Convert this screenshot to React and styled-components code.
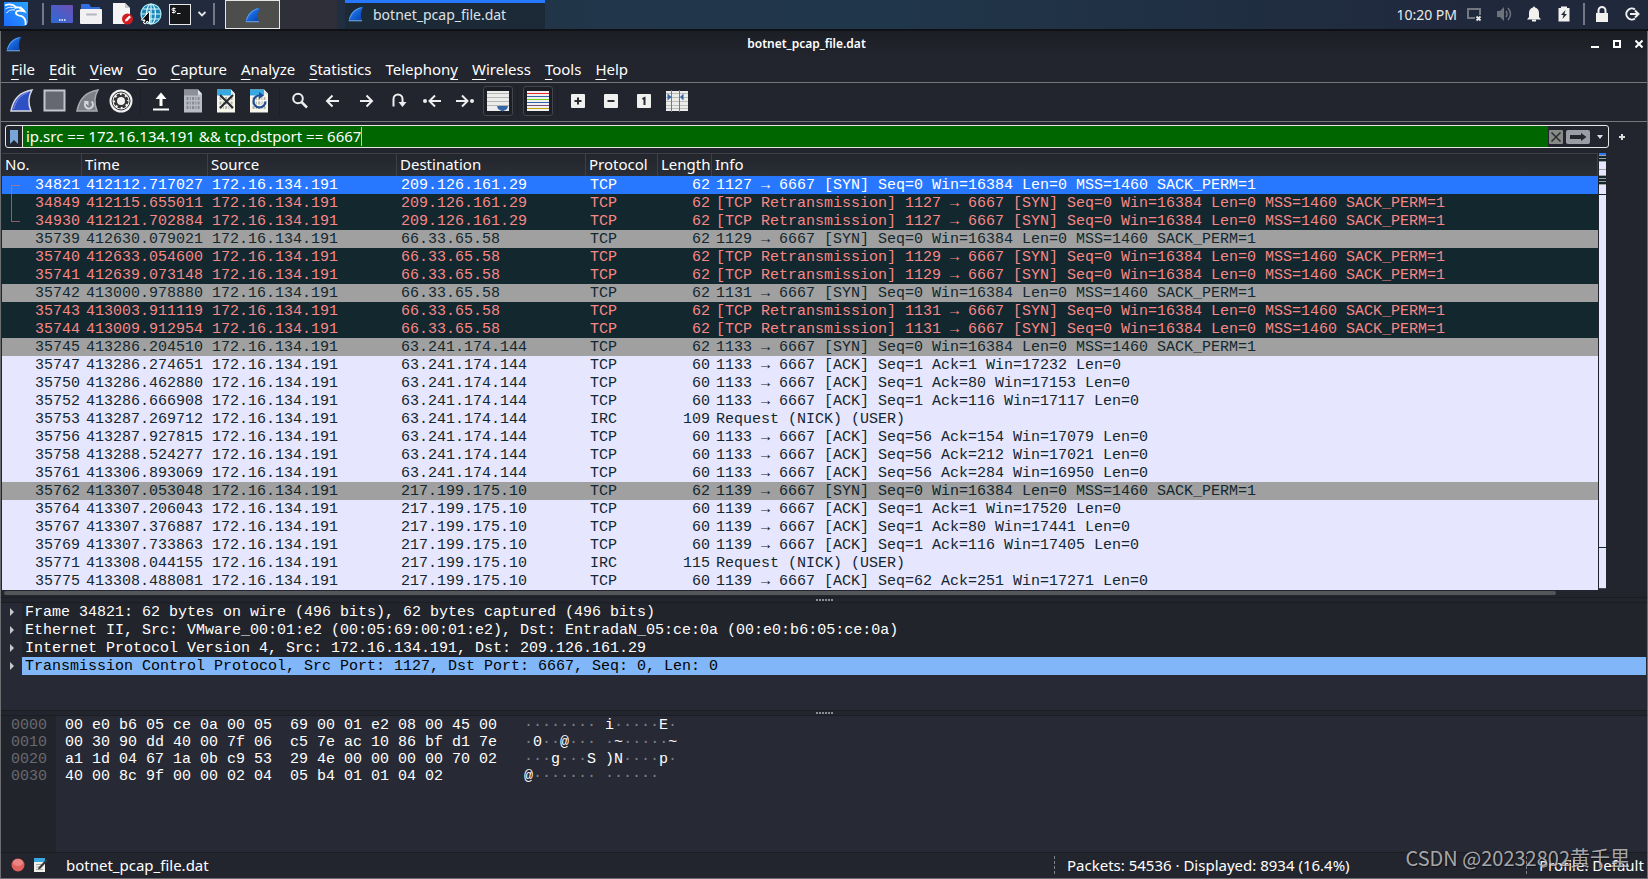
import React, { useState } from "react";
import styled, { createGlobalStyle } from "styled-components";

const packets = [
  ["34821", "412112.717027", "209.126.161.29", "TCP", "62", "1127 → 6667 [SYN] Seq=0 Win=16384 Len=0 MSS=1460 SACK_PERM=1", "selected"],
  ["34849", "412115.655011", "209.126.161.29", "TCP", "62", "[TCP Retransmission] 1127 → 6667 [SYN] Seq=0 Win=16384 Len=0 MSS=1460 SACK_PERM=1", "bad"],
  ["34930", "412121.702884", "209.126.161.29", "TCP", "62", "[TCP Retransmission] 1127 → 6667 [SYN] Seq=0 Win=16384 Len=0 MSS=1460 SACK_PERM=1", "bad"],
  ["35739", "412630.079021", "66.33.65.58", "TCP", "62", "1129 → 6667 [SYN] Seq=0 Win=16384 Len=0 MSS=1460 SACK_PERM=1", "syn"],
  ["35740", "412633.054600", "66.33.65.58", "TCP", "62", "[TCP Retransmission] 1129 → 6667 [SYN] Seq=0 Win=16384 Len=0 MSS=1460 SACK_PERM=1", "bad"],
  ["35741", "412639.073148", "66.33.65.58", "TCP", "62", "[TCP Retransmission] 1129 → 6667 [SYN] Seq=0 Win=16384 Len=0 MSS=1460 SACK_PERM=1", "bad"],
  ["35742", "413000.978880", "66.33.65.58", "TCP", "62", "1131 → 6667 [SYN] Seq=0 Win=16384 Len=0 MSS=1460 SACK_PERM=1", "syn"],
  ["35743", "413003.911119", "66.33.65.58", "TCP", "62", "[TCP Retransmission] 1131 → 6667 [SYN] Seq=0 Win=16384 Len=0 MSS=1460 SACK_PERM=1", "bad"],
  ["35744", "413009.912954", "66.33.65.58", "TCP", "62", "[TCP Retransmission] 1131 → 6667 [SYN] Seq=0 Win=16384 Len=0 MSS=1460 SACK_PERM=1", "bad"],
  ["35745", "413286.204510", "63.241.174.144", "TCP", "62", "1133 → 6667 [SYN] Seq=0 Win=16384 Len=0 MSS=1460 SACK_PERM=1", "syn"],
  ["35747", "413286.274651", "63.241.174.144", "TCP", "60", "1133 → 6667 [ACK] Seq=1 Ack=1 Win=17232 Len=0", "tcp"],
  ["35750", "413286.462880", "63.241.174.144", "TCP", "60", "1133 → 6667 [ACK] Seq=1 Ack=80 Win=17153 Len=0", "tcp"],
  ["35752", "413286.666908", "63.241.174.144", "TCP", "60", "1133 → 6667 [ACK] Seq=1 Ack=116 Win=17117 Len=0", "tcp"],
  ["35753", "413287.269712", "63.241.174.144", "IRC", "109", "Request (NICK) (USER)", "tcp"],
  ["35756", "413287.927815", "63.241.174.144", "TCP", "60", "1133 → 6667 [ACK] Seq=56 Ack=154 Win=17079 Len=0", "tcp"],
  ["35758", "413288.524277", "63.241.174.144", "TCP", "60", "1133 → 6667 [ACK] Seq=56 Ack=212 Win=17021 Len=0", "tcp"],
  ["35761", "413306.893069", "63.241.174.144", "TCP", "60", "1133 → 6667 [ACK] Seq=56 Ack=284 Win=16950 Len=0", "tcp"],
  ["35762", "413307.053048", "217.199.175.10", "TCP", "62", "1139 → 6667 [SYN] Seq=0 Win=16384 Len=0 MSS=1460 SACK_PERM=1", "syn"],
  ["35764", "413307.206043", "217.199.175.10", "TCP", "60", "1139 → 6667 [ACK] Seq=1 Ack=1 Win=17520 Len=0", "tcp"],
  ["35767", "413307.376887", "217.199.175.10", "TCP", "60", "1139 → 6667 [ACK] Seq=1 Ack=80 Win=17441 Len=0", "tcp"],
  ["35769", "413307.733863", "217.199.175.10", "TCP", "60", "1139 → 6667 [ACK] Seq=1 Ack=116 Win=17405 Len=0", "tcp"],
  ["35771", "413308.044155", "217.199.175.10", "IRC", "115", "Request (NICK) (USER)", "tcp"],
  ["35775", "413308.488081", "217.199.175.10", "TCP", "60", "1139 → 6667 [ACK] Seq=62 Ack=251 Win=17271 Len=0", "tcp"],
];

const details = [
  "Frame 34821: 62 bytes on wire (496 bits), 62 bytes captured (496 bits)",
  "Ethernet II, Src: VMware_00:01:e2 (00:05:69:00:01:e2), Dst: EntradaN_05:ce:0a (00:e0:b6:05:ce:0a)",
  "Internet Protocol Version 4, Src: 172.16.134.191, Dst: 209.126.161.29",
  "Transmission Control Protocol, Src Port: 1127, Dst Port: 6667, Seq: 0, Len: 0",
];

const bytes = [
  ["0000", "00 e0 b6 05 ce 0a 00 05  69 00 01 e2 08 00 45 00", "········ i·····E·"],
  ["0010", "00 30 90 dd 40 00 7f 06  c5 7e ac 10 86 bf d1 7e", "·0··@··· ·~·····~"],
  ["0020", "a1 1d 04 67 1a 0b c9 53  29 4e 00 00 00 00 70 02", "···g···S )N····p·"],
  ["0030", "40 00 8c 9f 00 00 02 04  05 b4 01 01 04 02", "@······· ······"],
];

// label, index of the underlined letter
const menus = [
  ["File", 0],
  ["Edit", 0],
  ["View", 0],
  ["Go", 0],
  ["Capture", 0],
  ["Analyze", 0],
  ["Statistics", 0],
  ["Telephony", 8],
  ["Wireless", 0],
  ["Tools", 0],
  ["Help", 0],
];

// y, height, colour of each stripe in the overview next to the list
const stripes = [
  [0, 2, "#2777ff"],
  [2, 7, "#12272e"],
  [2, 1, "#a0a0a0"],
  [5, 1, "#a0a0a0"],
  [8, 1, "#a0a0a0"],
  [16, 1, "#a0a0a0"],
  [22, 9, "#12272e"],
  [22, 1, "#a0a0a0"],
  [25, 1, "#a0a0a0"],
  [28, 1, "#a0a0a0"],
  [31, 1, "#a0a0a0"],
  [41, 1, "#12272e"],
  [394, 1, "#12272e"],
  [435, 1, "#4a4c52"],
];

const FIN = "M1 22C3 11 9 3 22 1C18 8 18 15 21 22Z";

const Fin = ({ size = 22 }) => (
  <svg width={size} height={size} viewBox="0 0 24 24">
    <defs>
      <linearGradient id="fin" x1="0" y1="0" x2="1" y2="1">
        <stop offset="0" stopColor="#4fa3f5" />
        <stop offset="0.5" stopColor="#1463d8" />
        <stop offset="1" stopColor="#0a3da8" />
      </linearGradient>
    </defs>
    <path d="M1 22C3 11 9 3 23 1C19 8 18 15 21 22Z" fill="url(#fin)" />
    <path d="M1 22H21" stroke="#5f93c9" strokeWidth="2" />
    <path d="M2 20C5 11 10 5 20 2.500" stroke="#7fbdf5" strokeWidth="1" fill="none" />
  </svg>
);

const KaliLogo = () => (
  <svg width="24" height="24" viewBox="0 0 24 24">
    <defs>
      <linearGradient id="kali" x1="0" y1="1" x2="1" y2="0">
        <stop offset="0" stopColor="#1d6cff" />
        <stop offset="1" stopColor="#29a3ff" />
      </linearGradient>
    </defs>
    <path d="M0 0H24V21L21 24H0Z" fill="url(#kali)" />
    <path
      d="M1 3.500C6 1 10 3 12.500 5.500C15 5 18 5.500 20.500 9.500C17 8.500 13 8 12 10.500C11.300 13 15 13.500 18 14.500C21 16 22 19 21.500 23"
      stroke="#fff"
      strokeWidth="1.800"
      fill="none"
    />
    <path d="M1.500 7C5 4.500 9 5 12 6.500M2.500 11C5 8 8 7.500 11 8M14 13.500C17 13 20 14.500 21 17" stroke="#fff" strokeWidth="1" fill="none" />
    <path d="M14 5.500L17 4.500L19 7L21.500 10L18 9Z" fill="#fff" />
  </svg>
);

const DesktopIcon = () => (
  <svg width="22" height="18" viewBox="0 0 22 18">
    <defs>
      <linearGradient id="desk" x1="0" y1="1" x2="1" y2="0">
        <stop offset="0" stopColor="#2b6bd8" />
        <stop offset="1" stopColor="#6d4fb4" />
      </linearGradient>
    </defs>
    <rect width="22" height="18" rx="1" fill="url(#desk)" />
    <path d="M8 15h1.500M10.500 15h1.500M13 15h1.500" stroke="#fff" strokeWidth="1.500" />
  </svg>
);

const FolderIcon = () => (
  <svg width="22" height="20" viewBox="0 0 22 20">
    <path d="M1 1q0-1 1-1h7l2 3h9v4H1z" fill="#2f6fe0" />
    <rect y="5" width="22" height="15" rx="1" fill="#f1f1f4" />
    <path d="M7 10.500h9" stroke="#b6b6bd" strokeWidth="2" strokeLinecap="round" />
  </svg>
);

const EditorIcon = () => (
  <svg width="24" height="22" viewBox="-3 0 24 22">
    <path d="M1 0h12l5 5v16H1z" fill="#f4f4f4" />
    <path d="M13 0l5 5h-5z" fill="#c9c9cc" />
    <circle cx="15.500" cy="16" r="5.500" fill="#d01c22" />
    <path d="M13 18.500l.6-2.200 3.700-3.700 1.600 1.600-3.700 3.700z" fill="#fff" />
  </svg>
);

const GlobeIcon = () => (
  <svg width="22" height="22" viewBox="0 0 22 22">
    <circle cx="11" cy="11" r="10" fill="#1b87b8" stroke="#9fe6f5" strokeWidth="1.200" />
    <g stroke="#d8f6fb" strokeWidth="1.200" fill="none">
      <ellipse cx="11" cy="11" rx="4.500" ry="10" />
      <path d="M11 1v20M1 11h20M3 6h16M3 16h16" />
    </g>
    <path d="M9.500 8v12l-2.500-2-1.500 3-2-1 1.500-3H1.500z" fill="#111" stroke="#fff" strokeWidth="1" />
  </svg>
);

const TerminalIcon = () => (
  <svg width="22" height="21" viewBox="0 0 22 21">
    <rect x="0.500" y="0.500" width="21" height="20" fill="#151719" stroke="#e8e8e8" />
    <path d="M6.500 4.500H4q-1 0-1 1t1 1h1.500q1 0 1 1t-1 1H3M4.800 3.500v6M8 9.500h3.500" stroke="#fff" fill="none" />
  </svg>
);

const Chevron = () => (
  <svg width="8" height="6" viewBox="0 0 8 6">
    <path d="M0.500 1L4 4.500 7.500 1" stroke="#e8e8e8" strokeWidth="1.800" fill="none" />
  </svg>
);

const Icon = ({ size = 24, children }) => (
  <svg width={size} height={size} viewBox={`0 0 ${size} ${size}`} fill="none">
    {children}
  </svg>
);

const Doc = ({ page, top, ink }) => (
  <>
    <path d="M2 0.500h14l4 4v19H2z" fill={page} />
    <path d="M2 0.500h14v6H2z" fill={top} />
    <path d="M16 0.500l4 5h-4z" fill="#dfe6ea" />
    <g stroke={ink} strokeWidth="3" strokeDasharray="2 1.300 1 1.300">
      <path d="M4.500 9.500h13M4.500 14h13M4.500 18.500h13" />
    </g>
  </>
);

const toolIcons = {
  start: (
    <Icon>
      <path d={FIN} fill="#2f4fc4" stroke="#d8dae0" strokeWidth="1.500" />
      <path d="M3.500 20C6 12 10 6 18 3.500" stroke="#7d92e6" strokeWidth="1" />
    </Icon>
  ),
  stop: (
    <Icon>
      <rect x="1.500" y="1.500" width="20" height="20" fill="#656871" stroke="#c3c5cd" strokeWidth="2" />
    </Icon>
  ),
  restart: (
    <Icon>
      <path d={FIN} fill="#7d8087" stroke="#a9abb2" strokeWidth="1.500" />
      <path d="M15.500 12.500A4 4 0 1 1 9.500 13.500" stroke="#d6d7db" strokeWidth="2" />
      <path d="M7.500 12h5v5z" fill="#d6d7db" />
    </Icon>
  ),
  options: (
    <Icon>
      <circle cx="12" cy="12" r="11.500" fill="#f2f2f2" />
      <circle cx="12" cy="12" r="9" stroke="#333" strokeWidth="1" />
      <circle cx="12" cy="12" r="6" stroke="#333" strokeWidth="3" strokeDasharray="3 1.700" />
      <circle cx="12" cy="12" r="5" stroke="#333" strokeWidth="2" />
    </Icon>
  ),
  open: (
    <Icon>
      <path d="M12 3.500l5.500 6.500h-4v7h-3v-7h-4z" fill="#fff" />
      <path d="M4 20.500h16" stroke="#fff" strokeWidth="2" />
    </Icon>
  ),
  save: (
    <Icon>
      <Doc page="#b9bcc4" top="#8d9098" ink="#84878f" />
    </Icon>
  ),
  close: (
    <Icon>
      <Doc page="#f6f6ea" top="#38a8e0" ink="#b3b4ac" />
      <path d="M5 6l13 13M18 6l-13 13" stroke="#26292d" strokeWidth="2" />
    </Icon>
  ),
  reload: (
    <Icon>
      <Doc page="#f6f6ea" top="#38a8e0" ink="#b3b4ac" />
      <path d="M12 6.500A6 6 0 1 0 17.500 12.500" stroke="#1f4e96" strokeWidth="2.200" />
      <path d="M11 3v7l5-3.500z" fill="#1f4e96" />
    </Icon>
  ),
  find: (
    <Icon>
      <circle cx="10" cy="9.500" r="4.800" stroke="#eee" strokeWidth="2" />
      <path d="M13.500 13l5.500 5.500" stroke="#eee" strokeWidth="2.500" />
    </Icon>
  ),
  back: (
    <Icon>
      <path d="M18 12H6.500M11.500 6.500L6 12l5.500 5.500" stroke="#eee" strokeWidth="2" />
    </Icon>
  ),
  forward: (
    <Icon>
      <path d="M6 12h11.500M12.500 6.500L18 12l-5.500 5.500" stroke="#eee" strokeWidth="2" />
    </Icon>
  ),
  goto: (
    <Icon>
      <path d="M6.500 17.500V10a4.500 4.500 0 0 1 9 0v4" stroke="#eee" strokeWidth="2" />
      <path d="M11.500 13h8l-4 5z" fill="#eee" />
    </Icon>
  ),
  first: (
    <Icon>
      <path d="M21 12H10.500M15 6.500L9.500 12l5.500 5.500" stroke="#eee" strokeWidth="2" />
      <circle cx="5" cy="12" r="2" fill="#eee" />
    </Icon>
  ),
  last: (
    <Icon>
      <path d="M3 12h10.500M9 6.500L14.500 12 9 17.500" stroke="#eee" strokeWidth="2" />
      <circle cx="19" cy="12" r="2" fill="#eee" />
    </Icon>
  ),
  autoscroll: (
    <Icon>
      <rect x="1" y="2" width="22" height="20" fill="#ececec" />
      <path d="M1 4.500h22M1 8.500h22M1 12.500h22M1 16.500h22" stroke="#b4b6b2" />
      <path d="M11 17h11l-1 3-4.500 2.500-4.500-2.500z" fill="#3465a4" />
    </Icon>
  ),
  colorize: (
    <Icon>
      <rect x="1" y="2" width="22" height="20" fill="#f0f0f0" />
      <path d="M1 4.500h22" stroke="#ef2929" />
      <path d="M1 7.500h22" stroke="#3465a4" />
      <path d="M1 10.500h22" stroke="#73d216" />
      <path d="M1 13.500h22" stroke="#3465a4" />
      <path d="M1 16.500h22" stroke="#75507b" />
      <path d="M1 19.500h22" stroke="#c4a000" />
    </Icon>
  ),
  zoomIn: (
    <Icon>
      <rect x="5" y="5" width="14" height="14" rx="1" fill="#f0f0ee" />
      <path d="M12 8.500v7M8.500 12h7" stroke="#2b2d33" strokeWidth="2" />
    </Icon>
  ),
  zoomOut: (
    <Icon>
      <rect x="5" y="5" width="14" height="14" rx="1" fill="#f0f0ee" />
      <path d="M8.500 12h7" stroke="#2b2d33" strokeWidth="2" />
    </Icon>
  ),
  zoomReset: (
    <Icon>
      <rect x="5" y="5" width="14" height="14" rx="1" fill="#f0f0ee" />
      <path d="M12.500 16V9l-2 1" stroke="#2b2d33" strokeWidth="2" />
    </Icon>
  ),
  columns: (
    <Icon>
      <rect x="1" y="2" width="22" height="20" fill="#ececec" />
      <path d="M1 4.500h22M1 8.500h22M1 12.500h22M1 16.500h22M1 19.500h22" stroke="#babdb6" />
      <path d="M6.500 1v22M14.500 1v22" stroke="#777" />
      <path d="M2.500 4.500L6.500 8l-4 3.500zM18.500 4.500L15 8l3.500 3.500z" fill="#3465a4" />
    </Icon>
  ),
};

const tools = [
  ["start", "stop", "restart", "options"],
  ["open", "save", "close", "reload"],
  ["find", "back", "forward", "goto", "first", "last", "autoscroll"],
  ["colorize"],
  ["zoomIn", "zoomOut", "zoomReset", "columns"],
];

const App = () => {
  const [filter, setFilter] = useState(
    "ip.src == 172.16.134.191 && tcp.dstport == 6667"
  );
  const [checked, setChecked] = useState(["autoscroll", "colorize"]);
  const [node, setNode] = useState(3);

  const toolHandler = (name) => {
    if (name !== "autoscroll" && name !== "colorize") return;
    if (checked.includes(name)) {
      setChecked(checked.filter((e) => e !== name));
    } else {
      setChecked([...checked, name]);
    }
  };

  return (
    <Screen>
      <GlobalStyle />
      <Panel>
        <Launchers>
          <PanelButton aria-label="Applications">
            <KaliLogo />
          </PanelButton>
          <PanelLine $margin="0 0 0 7px" />
          <PanelButton aria-label="Show desktop">
            <DesktopIcon />
          </PanelButton>
          <PanelButton aria-label="Files">
            <FolderIcon />
          </PanelButton>
          <PanelButton aria-label="Text editor">
            <EditorIcon />
          </PanelButton>
          <PanelButton aria-label="Browser">
            <GlobeIcon />
          </PanelButton>
          <PanelButton aria-label="Terminal">
            <TerminalIcon />
          </PanelButton>
          <PanelButton aria-label="More terminals">
            <Chevron />
          </PanelButton>
          <PanelLine />
        </Launchers>
        <Workspace aria-label="Workspace 1">
          <Fin size={16} />
        </Workspace>
        <WorkspaceEmpty />
        <Task>
          <Fin size={16} />
          botnet_pcap_file.dat
        </Task>
        <Tray>
          <span>10:20 PM</span>
          <svg width="16" height="16" viewBox="0 0 16 16">
            <path d="M9 12H2V3h12v6" stroke="#74777f" strokeWidth="2" fill="none" />
            <path d="M10.500 10.500l4 4M14.500 10.500l-4 4" stroke="#e8e8e8" strokeWidth="1.800" />
          </svg>
          <svg width="16" height="16" viewBox="0 0 16 16">
            <path d="M1 5h3l4-4v14l-4-4H1z" fill="#6e727c" />
            <path d="M10 5q2 3 0 6M12 2q5 6 0 12" stroke="#6e727c" strokeWidth="1.500" fill="none" />
          </svg>
          <svg width="16" height="16" viewBox="0 0 16 16">
            <path d="M8 0.500q1 0 1 1q4 1 4 5.500v4l2 2.500H1L3 11V7q0-4.500 4-5.500q0-1 1-1z" fill="#f1f1ef" />
            <path d="M6 14.500h4" stroke="#f1f1ef" strokeWidth="2" />
          </svg>
          <svg width="16" height="16" viewBox="0 0 16 16">
            <path d="M2.500 2H5V0.500h6V2h2.500v13.500h-11z" fill="#f1f1ef" />
            <path d="M9.500 4L5 9h2.500l-1 4L11 8H8.500z" fill="#20283a" />
          </svg>
          <PanelLine $margin="0 -5px 0 -3px" />
          <svg width="16" height="16" viewBox="0 0 16 16">
            <path d="M4.500 7V4.500a3.500 3.500 0 0 1 7 0V7" stroke="#f1f1ef" strokeWidth="2" fill="none" />
            <rect x="2" y="7" width="12" height="9" fill="#f1f1ef" />
          </svg>
          <svg width="16" height="16" viewBox="0 0 16 16">
            <path d="M11 3.500A5.500 5.500 0 1 0 11 12.500" stroke="#f1f1ef" strokeWidth="2" fill="none" />
            <path d="M6 8h7M11 4.500L14.500 8 11 11.500" stroke="#f1f1ef" strokeWidth="2" fill="none" />
          </svg>
        </Tray>
      </Panel>

      <Window>
        <TitleBar>
          <Fin size={16} />
          <Title>botnet_pcap_file.dat</Title>
          <WindowButton aria-label="Minimize">
            <Icon size={8}>
              <path d="M0 7h8" stroke="#fff" strokeWidth="2" />
            </Icon>
          </WindowButton>
          <WindowButton aria-label="Maximize">
            <Icon size={8}>
              <rect x="1" y="1" width="6" height="6" stroke="#fff" strokeWidth="2" />
            </Icon>
          </WindowButton>
          <WindowButton aria-label="Close">
            <Icon size={8}>
              <path d="M0.500 0.500l7 7M7.500 0.500l-7 7" stroke="#fff" strokeWidth="2" />
            </Icon>
          </WindowButton>
        </TitleBar>

        <MenuBar>
          {menus.map(([label, index]) => (
            <MenuButton key={label}>
              {label.slice(0, index)}
              <u>{label[index]}</u>
              {label.slice(index + 1)}
            </MenuButton>
          ))}
        </MenuBar>

        <ToolBar>
          {tools.map((group, index) => (
            <ToolGroup key={`group${index}`}>
              {group.map((name) => (
                <ToolButton
                  key={name}
                  aria-label={name}
                  $checked={checked.includes(name)}
                  onClick={() => toolHandler(name)}
                >
                  <span>{toolIcons[name]}</span>
                </ToolButton>
              ))}
            </ToolGroup>
          ))}
        </ToolBar>

        <FilterBar>
          <FilterBox>
            <FilterButton aria-label="Bookmarks" $width="16px">
              <svg width="8" height="14" viewBox="0 0 8 14">
                <path d="M0 0h8v14l-4-4-4 4z" fill="#77a5d8" />
              </svg>
            </FilterButton>
            <FilterField>
              <FilterInput
                aria-label="Display filter"
                value={filter}
                spellCheck={false}
                onChange={(e) => setFilter(e.target.value)}
              />
              <Caret />
            </FilterField>
            <FilterButton aria-label="Clear filter" $width="16px">
              <svg width="14" height="14" viewBox="0 0 14 14">
                <rect width="14" height="14" rx="1" fill="#888a85" />
                <path d="M2.500 2.500l9 9M11.500 2.500l-9 9" stroke="#2b2d33" strokeWidth="1.500" />
              </svg>
            </FilterButton>
            <FilterButton aria-label="Apply filter" $width="28px">
              <svg width="24" height="14" viewBox="0 0 24 14">
                <rect width="24" height="14" rx="2" fill="#9a9ca6" />
                <path d="M4 5h11V3l5.500 4L15 11V9H4z" fill="#25272e" />
              </svg>
            </FilterButton>
            <FilterButton aria-label="Recent filters" $width="16px">
              <svg width="6" height="4" viewBox="0 0 6 4">
                <path d="M0 0h6L3 4z" fill="#ddd" />
              </svg>
            </FilterButton>
          </FilterBox>
          <FilterButton aria-label="Add filter" $width="26px">
            <Icon size={8}>
              <path d="M4 1v6M1 4h6" stroke="#ddd" strokeWidth="2" />
            </Icon>
          </FilterButton>
        </FilterBar>

        <PacketPane>
          <PacketTable>
            <colgroup>
              <Col $width="80px" />
              <Col $width="126px" />
              <Col $width="189px" />
              <Col $width="189px" />
              <Col $width="72px" />
              <Col $width="54px" />
              <Col />
            </colgroup>
            <thead>
              <tr>
                <Th>No.</Th>
                <Th>Time</Th>
                <Th>Source</Th>
                <Th>Destination</Th>
                <Th>Protocol</Th>
                <Th>Length</Th>
                <Th>Info</Th>
              </tr>
            </thead>
            <tbody>
              {packets.map(([no, time, dst, proto, len, info, kind], index) => (
                <Row key={no} $kind={kind}>
                  <Td $right>
                    {index === 0 && <Bracket />}
                    {no}
                  </Td>
                  <Td>{time}</Td>
                  <Td>172.16.134.191</Td>
                  <Td>{dst}</Td>
                  <Td>{proto}</Td>
                  <Td $right>{len}</Td>
                  <Td>{info}</Td>
                </Row>
              ))}
            </tbody>
          </PacketTable>
          <Overview>
            <svg width="7" height="436" viewBox="0 0 7 436">
              <rect width="7" height="436" fill="#e7e6ff" />
              {stripes.map(([y, h, fill]) => (
                <rect key={`${y}-${h}`} y={y} width="7" height={h} fill={fill} />
              ))}
            </svg>
          </Overview>
        </PacketPane>
        <ScrollTrack>
          <ScrollThumb />
        </ScrollTrack>

        <Grip />
        <Tree>
          {details.map((text, index) => (
            <TreeRow key={text} onClick={() => setNode(index)}>
              <svg width="4" height="8" viewBox="0 0 4 8">
                <path d="M0 0l4 4-4 4z" fill="#c6c8cc" />
              </svg>
              <TreeText $active={node === index}>{text}</TreeText>
            </TreeRow>
          ))}
        </Tree>

        <Grip />
        <Bytes>
          <Offsets>
            {bytes.map(([offset]) => (
              <div key={offset}>{offset}</div>
            ))}
          </Offsets>
          <Hex>
            {bytes.map(([offset, hex]) => (
              <div key={offset}>{hex}</div>
            ))}
          </Hex>
          <Ascii>
            {bytes.map(([offset, , text]) => (
              <div key={offset}>
                {text.split(/(·+)/).map((part, i) => (part[0] === "·" ? <i key={i}>{part}</i> : part))}
              </div>
            ))}
          </Ascii>
        </Bytes>

        <StatusBar>
          <StatusFile>
            <svg width="14" height="14" viewBox="0 0 14 14">
              <circle cx="7" cy="7" r="6.500" fill="#e0605f" />
              <ellipse cx="7" cy="4.500" rx="5" ry="3.500" fill="#e98582" />
            </svg>
            <svg width="14" height="14" viewBox="0 0 14 14">
              <path d="M0 0h11v14H0z" fill="#f1f1ea" />
              <path d="M0 0h11v4H0z" fill="#38a8e0" />
              <path d="M2 6.500h6M2 9h4M2 11.500h7" stroke="#aaa" />
              <path d="M4.500 9.500L12 1.500l2 1-7.500 8-2.500 1z" fill="#33363a" />
            </svg>
            <span>botnet_pcap_file.dat</span>
          </StatusFile>
          <StatusPart>Packets: 54536 · Displayed: 8934 (16.4%)</StatusPart>
          <StatusPart>Profile: Default</StatusPart>
        </StatusBar>
      </Window>
      <Watermark>CSDN @20232802黄千里</Watermark>
    </Screen>
  );
};

const GlobalStyle = createGlobalStyle`
  * {
    box-sizing: border-box;
  }
  body {
    margin: 0;
    background: #23252e;
    color: #fff;
    font-family: "Noto Sans", "Open Sans", sans-serif;
    font-size: 15px;
  }
  button,
  input {
    font: inherit;
    color: inherit;
    border: 0;
    background: none;
    padding: 0;
    margin: 0;
    outline: none;
  }
  svg {
    display: block;
    flex: none;
  }
`;

const Screen = styled.div`
  position: relative;
  min-height: 100vh;
  display: flex;
  flex-direction: column;
  overflow: hidden;
`;

const Panel = styled.header`
  height: 31px;
  display: flex;
  flex: none;
  background: linear-gradient(90deg, #20293b 0%, #222a3e 14%, #21364a 36%, #20364a 55%, #20283c 90%);
  border-bottom: 2px solid #0f1115;
`;

const Launchers = styled.div`
  width: 225px;
  height: 28px;
  display: flex;
  align-items: center;
  gap: 7px;
  padding-left: 4px;
`;

const PanelButton = styled.button`
  display: flex;
  align-items: center;
`;

const PanelLine = styled.div`
  width: 2px;
  height: 22px;
  margin: ${(props) => props.$margin || "0"};
  background: #747985;
`;

const Workspace = styled.button`
  width: 55px;
  height: 29px;
  display: flex;
  align-items: center;
  justify-content: center;
  border: 1px solid #e6e6e6;
  background: #4d4d4c;
`;

const WorkspaceEmpty = styled.div`
  width: 57px;
  height: 29px;
  background: #2f2f3a;
`;

const Task = styled.button`
  width: 200px;
  height: 29px;
  margin-left: 8px;
  padding: 0 0 4px 3px;
  display: flex;
  align-items: center;
  gap: 9px;
  border-top: 3px solid #2777ff;
  background: #1c2a38;
  color: #dfe1e4;
  font-size: 14px;
`;

const Tray = styled.div`
  height: 28px;
  margin-left: auto;
  padding-right: 8px;
  display: flex;
  align-items: center;
  gap: 14px;
  color: #e8e9ec;
  font-size: 14px;
  span {
    margin-right: -5px;
  }
`;

const Window = styled.main`
  flex: 1;
  display: flex;
  flex-direction: column;
  border: 1px solid #6b6d70;
  border-top: 0;
`;

const TitleBar = styled.div`
  height: 26px;
  padding: 0 4px 0 5px;
  display: flex;
  align-items: center;
  gap: 14px;
  background: linear-gradient(#1c1e26, #23252e);
`;

const Title = styled.div`
  flex: 1;
  padding-bottom: 2px;
  text-align: center;
  font-size: 12px;
  font-weight: 600;
`;

const WindowButton = styled.button`
  width: 8px;
  height: 8px;
`;

const MenuBar = styled.nav`
  height: 26px;
  padding-left: 3px;
  display: flex;
  align-items: flex-start;
  border-bottom: 1px solid #75777c;
`;

const MenuButton = styled.button`
  padding: 0 7px;
  line-height: 24px;
  u {
    text-underline-offset: 4px;
    text-decoration-skip-ink: none;
  }
`;

const ToolBar = styled.div`
  height: 39px;
  padding: 0 0 2px 4px;
  display: flex;
  align-items: center;
  border-bottom: 1px solid #75777c;
`;

const ToolGroup = styled.div`
  display: flex;
  & + & {
    padding-left: 3px;
    margin-left: 3px;
    border-left: 1px solid #1e2027;
  }
`;

const ToolButton = styled.button`
  width: 33px;
  height: 30px;
  display: flex;
  align-items: center;
  justify-content: center;
  span {
    width: 30px;
    height: 30px;
    display: flex;
    align-items: center;
    justify-content: center;
    border-radius: 3px;
    border: 1px solid ${(props) => (props.$checked ? "#43464e" : "transparent")};
    background: ${(props) => (props.$checked ? "#1d1f26" : "none")};
  }
`;

const FilterBar = styled.div`
  padding: 3px 12px 5px 4px;
  display: flex;
`;

const FilterBox = styled.div`
  flex: 1;
  height: 23px;
  display: flex;
  border: 1px solid #e6e6e2;
  border-radius: 3px;
`;

const FilterButton = styled.button`
  width: ${(props) => props.$width};
  display: flex;
  align-items: center;
  justify-content: center;
`;

const FilterField = styled.div`
  flex: 1;
  display: flex;
  align-items: center;
  border-left: 1px solid #e6e6e2;
  background: #006600;
`;

const FilterInput = styled.input`
  field-sizing: content;
  height: 21px;
  padding: 0 0 2px 3px;
`;

const Caret = styled.div`
  width: 1px;
  height: 19px;
  background: #f0a8f0;
`;

const PacketPane = styled.section`
  padding-left: 1px;
  display: flex;
  align-items: flex-start;
`;

const PacketTable = styled.table`
  flex: 1;
  width: 0;
  table-layout: fixed;
  border-collapse: collapse;
  white-space: pre;
`;

const Col = styled.col`
  width: ${(props) => props.$width || "auto"};
`;

const Th = styled.th`
  height: 23px;
  padding: 0 0 2px 3px;
  line-height: 20px;
  text-align: left;
  font-weight: 400;
  background: linear-gradient(#22252c, #2a2e36);
  box-shadow: inset 0 1px #3d4047, inset -1px 0 #3d4047;
`;

const kinds = {
  selected: ["#2777ff", "#ffffff"],
  bad: ["#12272e", "#f78787"],
  syn: ["#a0a0a0", "#12272e"],
  tcp: ["#e7e6ff", "#12272e"],
};

const Row = styled.tr`
  background: ${(props) => kinds[props.$kind][0]};
  color: ${(props) => kinds[props.$kind][1]};
`;

const Td = styled.td`
  position: relative;
  height: 18px;
  padding: 2px 2px 0 4px;
  font: 15px/16px "Liberation Mono", monospace;
  text-align: ${(props) => (props.$right ? "right" : "left")};
`;

const Bracket = styled.div`
  position: absolute;
  left: 9px;
  top: 9px;
  width: 9px;
  height: 37px;
  z-index: 1;
  border: 1px solid rgba(200, 120, 120, 0.7);
  border-right: 0;
`;

const Overview = styled.div`
  width: 49px;
  padding-left: 1px;
`;

const ScrollTrack = styled.div`
  height: 7px;
  padding: 1px 91px 2px 3px;
`;

const ScrollThumb = styled.div`
  height: 4px;
  border-radius: 2px;
  background: #54565a;
`;

const Grip = styled.div`
  height: 6px;
  display: flex;
  align-items: center;
  justify-content: center;
  border: solid #1b1d23;
  border-width: 1px 0;
  &::after {
    content: "";
    width: 17px;
    height: 2px;
    background: repeating-linear-gradient(90deg, #8b8d92 0 2px, transparent 2px 3px);
  }
`;

const Tree = styled.section`
  height: 107px;
  background: #272a34;
  font: 15px/16px "Liberation Mono", monospace;
  white-space: pre;
`;

const TreeRow = styled.div`
  display: flex;
  align-items: center;
  padding-left: 9px;
  padding-right: 1px;
`;

const TreeText = styled.div`
  flex: 1;
  margin-left: 8px;
  padding: 2px 0 0 3px;
  background: ${(props) => (props.$active ? "#81b7f8" : "#22242c")};
  color: ${(props) => (props.$active ? "#000" : "#fff")};
`;

const Bytes = styled.section`
  flex: 1;
  display: flex;
  background: #272a34;
  font: 15px/17px "Liberation Mono", monospace;
  white-space: pre;
`;

const Offsets = styled.div`
  width: 55px;
  padding: 1px 0 0 10px;
  background: #22242c;
  color: #686a6f;
`;

const Hex = styled.div`
  width: 468px;
  padding: 1px 0 0 9px;
`;

const Ascii = styled.div`
  padding-top: 1px;
  i {
    color: #7d7f85;
    font-style: normal;
  }
`;

const StatusBar = styled.footer`
  height: 26px;
  padding-bottom: 2px;
  display: grid;
  grid-template-columns: minmax(0, 1fr) 472px 121px;
  align-items: center;
  border-top: 1px solid #1b1d23;
`;

const StatusFile = styled.div`
  display: flex;
  align-items: center;
  gap: 9px;
  padding-left: 10px;
  span {
    margin-left: 9px;
  }
`;

const StatusPart = styled.div`
  padding-left: 12px;
  line-height: 18px;
  white-space: nowrap;
  border-left: 1px dashed #83858a;
`;

const Watermark = styled.div`
  position: absolute;
  right: 18px;
  bottom: 7px;
  font: 20px/28px "Noto Sans CJK SC", sans-serif;
  color: rgba(205, 205, 205, 0.8);
  text-shadow: 1px 1px 1px rgba(0, 0, 0, 0.5);
  pointer-events: none;
`;

export default App;
